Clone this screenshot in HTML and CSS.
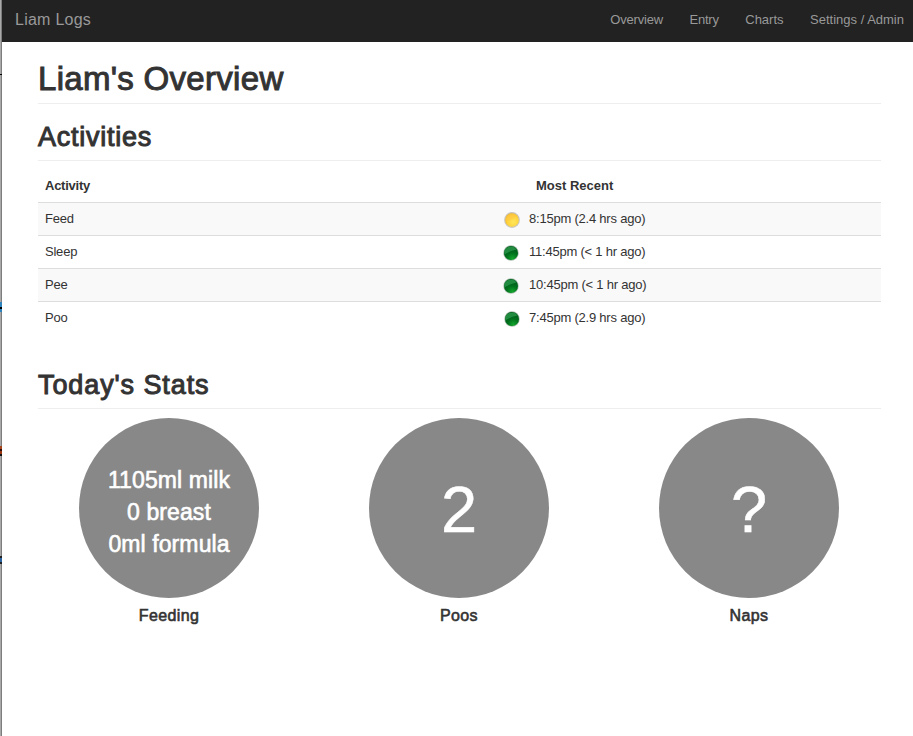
FILE: index.html
```html
<!DOCTYPE html>
<html lang="en">
<head>
<meta charset="utf-8">
<title>Liam Logs</title>
<link rel="stylesheet" href="styles.css">
</head>
<body>
<svg class="defs" width="0" height="0" aria-hidden="true">
  <defs>
    <radialGradient id="yellow" cx=".6" cy=".65" r=".65"><stop offset="0" stop-color="#ffe75a"/><stop offset=".65" stop-color="#ffd33c"/><stop offset="1" stop-color="#f2b928"/></radialGradient>
    <radialGradient id="green" cx=".6" cy=".9" r=".75"><stop offset="0" stop-color="#12a52c"/><stop offset=".55" stop-color="#00701c"/><stop offset="1" stop-color="#005c1c"/></radialGradient>
    <symbol id="dot-yellow" viewBox="0 0 16 16"><circle cx="8" cy="8" r="7.9" fill="#c9c6bd"/><circle cx="8" cy="8" r="6.8" fill="url(#yellow)"/><path d="M1.7 9A6.4 6.4 0 0 1 12 3.2Q10 8 1.7 9Z" fill="#ffc846" opacity=".6"/></symbol>
    <symbol id="dot-green" viewBox="0 0 16 16"><circle cx="8" cy="8" r="7.7" fill="#a9bcac"/><circle cx="8" cy="8" r="7" fill="url(#green)"/><path d="M1.4 9.5A6.7 6.7 0 0 1 13.6 4.6Q6 6 1.4 9.5Z" fill="#279447" opacity=".85"/></symbol>
  </defs>
</svg>
<div class="edge"><i class="tick"></i><i class="mark blue"></i><i class="mark red"></i><i class="mark navy"></i></div>
<div class="page">
  <nav class="navbar">
    <a class="brand">Liam Logs</a>
    <div class="links"><a class="narrow">Overview</a><a class="narrow">Entry</a><a>Charts</a><a>Settings / Admin</a></div>
  </nav>
  <main>
    <h1><span>Liam's Overview</span></h1>
    <h2 class="activities"><span>Activities</span></h2>
    <table>
      <thead><tr><th class="name">Activity</th><th class="icon"></th><th class="recent">Most Recent</th></tr></thead>
      <tbody>
        <tr><td>Feed</td><td class="icon"><svg class="dot"><use href="#dot-yellow"/></svg></td><td>8:15pm (2.4 hrs ago)</td></tr>
        <tr><td>Sleep</td><td class="icon"><svg class="dot shift"><use href="#dot-green"/></svg></td><td>11:45pm (&lt; 1 hr ago)</td></tr>
        <tr><td>Pee</td><td class="icon"><svg class="dot shift"><use href="#dot-green"/></svg></td><td>10:45pm (&lt; 1 hr ago)</td></tr>
        <tr><td>Poo</td><td class="icon"><svg class="dot"><use href="#dot-green"/></svg></td><td>7:45pm (2.9 hrs ago)</td></tr>
      </tbody>
    </table>
    <h2 class="today"><span>Today's Stats</span></h2>
    <section class="stats">
      <div class="stat"><div class="circle feeding"><span>1105ml milk</span><span>0 breast</span><span>0ml formula</span></div><h4>Feeding</h4></div>
      <div class="stat"><div class="circle big">2</div><h4>Poos</h4></div>
      <div class="stat"><div class="circle big">?</div><h4>Naps</h4></div>
    </section>
  </main>
</div>
</body>
</html>
```
FILE: styles.css
```css
* { box-sizing: border-box; }
body {
  margin: 0;
  display: flex;
  height: 736px;
  overflow: hidden;
  background: #fff;
  color: #333;
  font: 13px/18px "Liberation Sans", Arial, sans-serif;
}
.defs { position: absolute; }
.edge {
  position: relative;
  flex: 0 0 2px;
  background: linear-gradient(90deg, #a9a9a9 50%, #7d7d7d 50%);
}
.edge i { position: absolute; left: 0; width: 2px; }
.tick { top: 74px; height: 1px; background: #000; }
.mark { height: 10px; }
.blue { top: 302px; background: linear-gradient(#2f83bd 50%, #000 50%, #000 70%, #2f83bd 70%); }
.red { top: 446px; background: linear-gradient(#a6441d 30%, #32100a 30%, #32100a 50%, #9a3511 50%, #9a3511 80%, #111 80%); }
.navy { top: 556px; height: 8px; background: linear-gradient(#222 25%, #2c62a0 25%, #2c62a0 75%, #222 75%); }
.page { flex: 1; min-width: 0; }
.navbar {
  display: flex;
  justify-content: space-between;
  height: 42px;
  padding: 0 9px 0 13px;
  background: #222;
  color: #999;
  line-height: 40px;
}
.brand { font-size: 16px; letter-spacing: .25px; }
.links { display: flex; gap: 26.5px; }
.narrow { letter-spacing: -.2px; }
h1, h2, h4 { margin: 0; font-weight: 400; }
h1 span, h2 span { -webkit-text-stroke: 1px currentColor; }
h4, .feeding { -webkit-text-stroke: .6px currentColor; }
main { padding: 0 32px 0 36px; }
h1 {
  height: 62px;
  padding-top: 18px;
  border-bottom: 1px solid #eee;
  font-size: 33px;
  line-height: 38px;
  letter-spacing: .3px;
}
h2 { border-bottom: 1px solid #eee; font-size: 27px; line-height: 32px; }
.activities { height: 57px; padding-top: 17px; letter-spacing: .75px; }
.today { height: 75px; padding-top: 35px; letter-spacing: .9px; }
table { width: 843px; border-collapse: collapse; table-layout: fixed; margin-top: 8px; }
th, td { height: 33px; padding: 0 7px; border-top: 1px solid #ddd; text-align: left; line-height: 18px; vertical-align: middle; }
th { border-top: 0; padding-top: 2px; }
td { letter-spacing: -.22px; }
th.name { width: 458px; letter-spacing: -.25px; }
.icon { width: 26px; padding: 0 0 0 8px; }
th.recent { padding-left: 14px; }
tbody tr:nth-child(odd) { background: #f9f9f9; }
.dot { display: block; width: 16px; height: 16px; margin-top: 2px; }
.shift { margin-left: -1px; }
.stats { display: flex; margin: 9px -14px 0; }
.stat { flex: 0 0 290px; display: flex; flex-direction: column; align-items: center; }
.circle {
  display: flex;
  flex-direction: column;
  align-items: center;
  justify-content: center;
  width: 180px;
  height: 180px;
  border-radius: 50%;
  background: #888;
  color: #fff;
}
.feeding { padding-top: 8px; font-size: 23px; line-height: 32px; letter-spacing: .1px; }
.big { font-size: 65px; line-height: 70px; padding-top: 4px; -webkit-text-stroke: .5px currentColor; }
h4 { margin-top: 8px; font-size: 16px; line-height: 20px; letter-spacing: .35px; }
```
